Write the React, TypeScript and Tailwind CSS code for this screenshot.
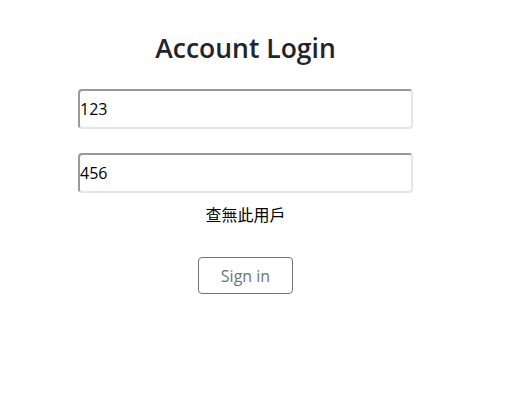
const inputClass =
    "h-[40px] w-full rounded-[4px] border-2 border-t-[#9a9a9a] border-l-[#9a9a9a] border-r-[#e6e6e6] border-b-[#e6e6e6] bg-white px-0 text-[16px] text-black outline-none";

export default function App() {
    return (
        <main
            className="min-h-screen bg-white"
            style={{ fontFamily: '"Open Sans", "Noto Sans CJK TC", sans-serif' }}
        >
            <div className="ml-[78px] flex w-[335px] flex-col items-center pt-[33px]">
                <h2 className="text-[26.5px] font-semibold leading-[31px] text-[#212529]">
                    Account Login
                </h2>

                <input className={`mt-[25px] ${inputClass}`} defaultValue="123" />
                <input className={`mt-[24px] ${inputClass}`} defaultValue="456" />

                <p className="mt-[10px] text-[16px] leading-[24px] text-black">
                    查無此用戶
                </p>

                <button className="mt-[30px] h-[37px] w-[95px] rounded-[4px] border border-[#6c757d] text-[16px] text-[#6c757d]">
                    Sign in
                </button>
            </div>
        </main>
    );
}
